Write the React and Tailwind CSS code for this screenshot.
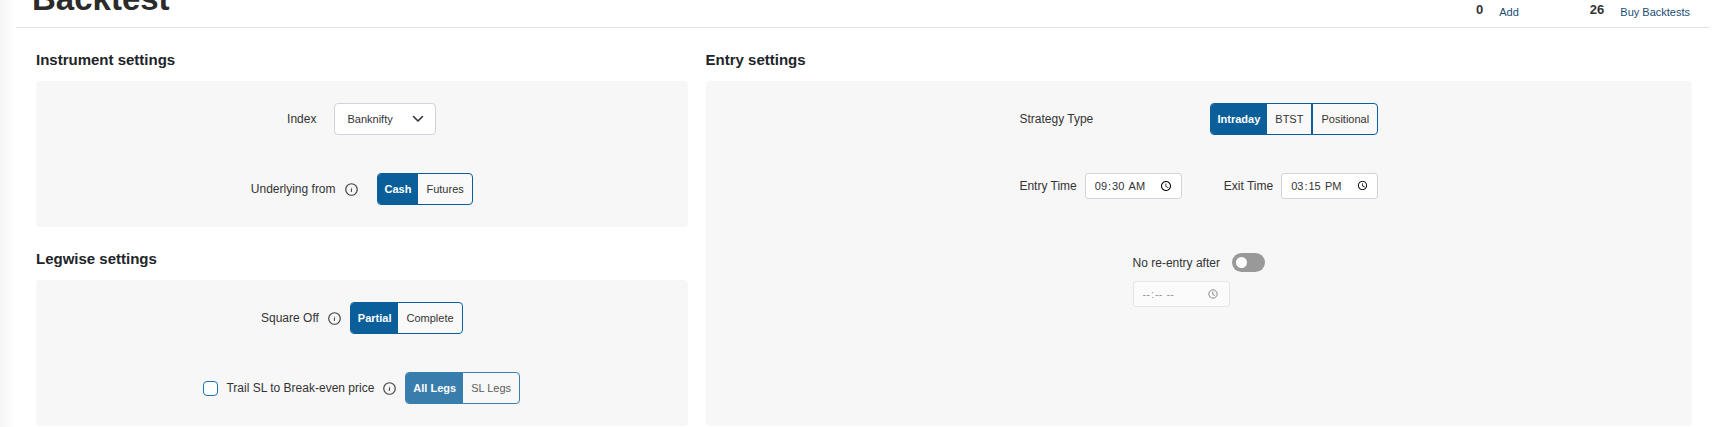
import { useState } from "react";

function InfoIcon() {
  return (
    <svg viewBox="0 0 14 14" className="size-[13px] shrink-0 text-[#444]" fill="none" stroke="currentColor" aria-hidden="true">
      <circle cx="7" cy="7" r="6.2" strokeWidth="1.3" />
      <path d="M7.1 6 6.8 9.6" strokeWidth="1.2" />
      <circle cx="7.3" cy="4.6" r="0.4" fill="currentColor" stroke="none" />
    </svg>
  );
}

function Segmented({ label, options, muted = false }) {
  const [active, setActive] = useState(options[0]);
  return (
    <div
      role="group"
      aria-label={label}
      className={`flex h-8 overflow-hidden rounded border border-[#0a5f9b] bg-[#f9f9f9] text-[11px] ${muted ? "opacity-80" : ""}`}
    >
      {options.map((option, i) => (
        <button
          key={option}
          type="button"
          aria-pressed={active === option}
          onClick={() => setActive(option)}
          className={`${i > 1 ? "border-l-2 border-[#0a5f9b]" : ""} ${
            active === option ? "bg-[#0a5f9b] px-[7px] font-bold text-white" : "px-2 text-[#333]"
          }`}
        >
          {option}
        </button>
      ))}
    </div>
  );
}

function Section({ title, className = "", children }) {
  return (
    <section className={`flex flex-col ${className}`}>
      <h2 className="mb-[11px] text-[15px] leading-5 font-bold text-[#212529]">{title}</h2>
      <div className="flex grow flex-col items-center gap-[38px] rounded bg-[#f7f7f7] py-[22px]">{children}</div>
    </section>
  );
}

function TimeInput(props) {
  return (
    <input
      type="time"
      className="col-start-1 row-start-1 h-[26px] w-[97px] rounded-[3px] border border-[#ced4da] bg-white pr-[6px] pl-2 text-[11px] text-[#333] disabled:opacity-50"
      {...props}
    />
  );
}

export default function App() {
  return (
    <div className="min-h-screen bg-white bg-[linear-gradient(90deg,#f5f5f5_0px,#ffffff_16px)] font-['Liberation_Sans',Arial,sans-serif] text-xs text-[#333]">
      <header className="mr-1 ml-4 flex h-7 items-end justify-between overflow-hidden border-b border-[#e3e3e3] pr-5 pl-4">
        <h1 className="pb-3 text-[33px] leading-none font-bold text-[#2b2b2b]">Backtest</h1>
        <div className="flex gap-[71px] pb-[5px]">
          <div className="flex items-center gap-4">
            <span className="pb-1 text-[13px] leading-4 font-bold">0</span>
            <a href="#add" className="text-[11px] leading-4 text-[#1b4c74]">Add</a>
          </div>
          <div className="flex items-center gap-4">
            <span className="pb-1 text-[13px] leading-4 font-bold">26</span>
            <a href="#buy" className="text-[11px] leading-4 text-[#1b4c74]">Buy Backtests</a>
          </div>
        </div>
      </header>

      <main className="mr-[13px] ml-[27px] flex pt-[22px]">
        <div className="flex w-2/5 flex-col gap-[22px] px-[9px]">
          <Section title="Instrument settings">
            <div className="flex items-center gap-[18px]">
              <label htmlFor="index">Index</label>
              <div className="grid items-center">
                <select
                  id="index"
                  className="col-start-1 row-start-1 h-8 w-[102px] appearance-none rounded border border-[#ced4da] bg-white pl-3 text-[11px] text-[#333]"
                >
                  <option>Banknifty</option>
                </select>
                <svg
                  viewBox="0 0 12 12"
                  className="pointer-events-none col-start-1 row-start-1 mr-3 size-3 justify-self-end text-[#333]"
                  fill="none"
                  stroke="currentColor"
                  strokeWidth="1.6"
                  strokeLinecap="round"
                  strokeLinejoin="round"
                  aria-hidden="true"
                >
                  <path d="M1.5 3.5 6 8 10.5 3.5" />
                </svg>
              </div>
            </div>
            <div className="flex items-center">
              <span className="mr-[9px]">Underlying from</span>
              <InfoIcon />
              <div className="ml-[19px]">
                <Segmented label="Underlying from" options={["Cash", "Futures"]} />
              </div>
            </div>
          </Section>

          <Section title="Legwise settings">
            <div className="flex items-center gap-[9px]">
              <span>Square Off</span>
              <InfoIcon />
              <Segmented label="Square Off" options={["Partial", "Complete"]} />
            </div>
            <div className="flex items-center gap-[9px]">
              <label className="flex items-center gap-2">
                <input
                  type="checkbox"
                  className="size-[15px] appearance-none rounded border border-[#1a76b8] bg-white checked:bg-[#0a5f9b]"
                />
                Trail SL to Break-even price
              </label>
              <InfoIcon />
              <Segmented label="Trail SL to Break-even price" options={["All Legs", "SL Legs"]} muted />
            </div>
          </Section>
        </div>

        <div className="flex w-3/5 flex-col px-[9px]">
          <Section title="Entry settings" className="grow">
            <div className="flex flex-col gap-[38px]">
              <div className="flex items-center justify-between">
                <span>Strategy Type</span>
                <Segmented label="Strategy Type" options={["Intraday", "BTST", "Positional"]} />
              </div>
              <div className="flex items-center justify-between gap-[42px]">
                <div className="flex items-center gap-2">
                  <label htmlFor="entry-time">Entry Time</label>
                  <TimeInput id="entry-time" defaultValue="09:30" />
                </div>
                <div className="flex items-center gap-2">
                  <label htmlFor="exit-time">Exit Time</label>
                  <TimeInput id="exit-time" defaultValue="15:15" />
                </div>
              </div>
            </div>
            <div className="flex flex-col gap-[9px] pt-4">
              <label className="flex items-center gap-3">
                No re-entry after
                <input
                  type="checkbox"
                  role="switch"
                  className="h-[19px] w-[33px] appearance-none rounded-full bg-[#999] px-1 py-1 before:block before:size-[11px] before:rounded-full before:bg-white checked:bg-[#0a5f9b] checked:before:ml-auto"
                />
              </label>
              <div className="grid w-[97px] items-center">
                <TimeInput aria-label="No re-entry after time" disabled />
                <svg
                  viewBox="0 0 24 24"
                  className="pointer-events-none z-10 col-start-1 row-start-1 mr-3 size-[10px] justify-self-end text-[#888]"
                  fill="none"
                  stroke="currentColor"
                  strokeWidth="2.4"
                  aria-hidden="true"
                >
                  <circle cx="12" cy="12" r="10" />
                  <path d="M11.5 6v7l5 3" />
                </svg>
              </div>
            </div>
          </Section>
        </div>
      </main>
    </div>
  );
}
